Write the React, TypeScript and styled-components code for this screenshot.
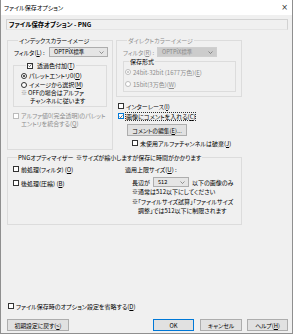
import React from 'react';
import styled, { createGlobalStyle, css } from 'styled-components';

const Global = createGlobalStyle`
  html, body {
    margin: 0;
    padding: 0;
    background: #f0f0f0;
  }
  body {
    font-family: "Noto Sans CJK JP", "Noto Sans", sans-serif;
    font-size: 6px;
    line-height: 7px;
    color: #000;
    font-feature-settings: "palt";
  }
  u { text-decoration-thickness: 0.5px; text-underline-offset: 1px; }
`;

const Window = styled.div`
  width: 293px;
  height: 334px;
  box-sizing: border-box;
  border: 1px solid #8f8f8f;
  border-top: none;
  display: flex;
  flex-direction: column;
  background: #f0f0f0;
`;

const TitleBar = styled.div`
  height: 15px;
  flex: none;
  background: #fff;
  display: flex;
  align-items: center;
  justify-content: space-between;
  padding: 0 4px 0 3px;
`;

const Close = styled.span`
  font-family: "DejaVu Sans", sans-serif;
  font-size: 8px;
  color: #333;
`;

const Body = styled.div`
  flex: 1;
  display: flex;
  flex-direction: column;
  padding: 4px 4px 2px 5px;
`;

const Header = styled.div`
  height: 11px;
  box-sizing: border-box;
  border: 1px solid #d2d2d2;
  border-bottom-color: #e4e4e4;
  display: flex;
  align-items: center;
  padding-left: 2px;
  font-weight: 700;
  font-size: 6.3px;
`;

const MainRow = styled.div`
  display: flex;
  gap: 3px;
  margin-top: 7px;
  padding-left: 1px;
`;

const Column = styled.div`
  display: flex;
  flex-direction: column;
`;

const Group = styled.fieldset<{ $w: number; $pad?: string }>`
  margin: 0;
  min-width: 0;
  width: ${p => p.$w}px;
  box-sizing: border-box;
  border: 1px solid #dcdcdc;
  padding: ${p => p.$pad ?? '0 0 4px 6px'};
  display: flex;
  flex-direction: column;
`;

const Legend = styled.legend<{ $off?: boolean }>`
  margin-left: 4px;
  padding: 0 1px;
  line-height: 7px;
  color: ${p => (p.$off ? '#8d8d8d' : '#000')};
  display: flex;
  align-items: center;
  gap: 2px;
`;

const Row = styled.div<{ $mt?: number; $ml?: number; $h?: number }>`
  display: flex;
  align-items: center;
  height: ${p => p.$h ?? 8}px;
  margin-top: ${p => p.$mt ?? 0}px;
  margin-left: ${p => p.$ml ?? 0}px;
  white-space: nowrap;
`;

const Text = styled.span<{ $off?: boolean; $w?: number }>`
  color: ${p => (p.$off ? '#8d8d8d' : '#000')};
  ${p => p.$w && css`width: ${p.$w}px; flex: none;`}
`;

const SelectBox = styled.div<{ $w: number; $off?: boolean }>`
  width: ${p => p.$w}px;
  height: 10px;
  box-sizing: border-box;
  border: 1px solid ${p => (p.$off ? '#cfcfcf' : '#adadad')};
  background: ${p => (p.$off ? '#cccccc' : '#e5e5e5')};
  color: ${p => (p.$off ? '#8a8a8a' : '#000')};
  display: flex;
  align-items: center;
  justify-content: space-between;
  padding: 0 3px 0 4px;
  font-size: 5.6px;
  flex: none;
`;

const Box = styled.span<{ $focus?: boolean; $off?: boolean; $round?: boolean }>`
  width: 6px;
  height: 6px;
  box-sizing: border-box;
  flex: none;
  border: 1px solid ${p => (p.$off ? '#bcbcbc' : p.$focus ? '#0078d7' : '#333')};
  border-radius: ${p => (p.$round ? '50%' : '0')};
  background: #fff;
  display: inline-flex;
  align-items: center;
  justify-content: center;
  margin-right: 2px;
`;

const Dot = styled.span<{ $off?: boolean }>`
  width: 2px;
  height: 2px;
  border-radius: 50%;
  background: ${p => (p.$off ? '#bcbcbc' : '#222')};
`;

const Focus = styled.span`
  outline: 1px dotted #333;
  outline-offset: 0;
`;

const Note = styled.div<{ $ml?: number; $mt?: number; $lh?: number }>`
  display: flex;
  margin-left: ${p => p.$ml ?? 0}px;
  margin-top: ${p => p.$mt ?? 0}px;
  line-height: ${p => p.$lh ?? 7}px;
  white-space: nowrap;
`;

const NoteBody = styled.div<{ $indent?: number }>`
  display: flex;
  flex-direction: column;
  & > span + span { padding-left: ${p => p.$indent ?? 0}px; }
`;

const Button = styled.div<{ $w: number; $default?: boolean }>`
  width: ${p => p.$w}px;
  height: 12px;
  box-sizing: border-box;
  border: ${p => (p.$default ? '1.5px solid #0078d7' : '1px solid #adadad')};
  background: #e1e1e1;
  display: flex;
  align-items: center;
  justify-content: center;
  font-size: 5.8px;
  flex: none;
`;

const ButtonRow = styled.div`
  display: flex;
  align-items: center;
  margin-top: 9px;
  padding-left: 1px;
`;

const Spacer = styled.div`
  flex: 1;
`;

const Chevron = () => (
  <svg width={5} height={3} viewBox="0 0 10 6" fill="none" stroke="#555" strokeWidth={1.2}>
    <path d="M1 1 L5 5 L9 1" />
  </svg>
);

const Check = ({ checked, focus, off }: { checked?: boolean; focus?: boolean; off?: boolean }) => (
  <Box $focus={focus} $off={off}>
    {checked && (
      <svg width={5} height={5} viewBox="0 0 10 10" fill="none" stroke="#222" strokeWidth={1.6}>
        <path d="M1.5 5.2 L4 7.8 L8.6 2.2" />
      </svg>
    )}
  </Box>
);

const Radio = ({ on, off }: { on?: boolean; off?: boolean }) => (
  <Box $round $off={off}>{on && <Dot $off={off} />}</Box>
);

export default function App() {
  return (
    <>
      <Global />
      <Window>
        <TitleBar>
          <span>ファイル保存オプション</span>
          <Close>×</Close>
        </TitleBar>
        <Body>
          <Header>ファイル保存オプション - PNG</Header>
          <MainRow>
            <Group $w={106} $pad="0 0 21px 6px">
              <Legend>インデックスカラーイメージ</Legend>
              <Row $mt={3} $h={10}>
                <Text $w={35}>フィルタ(<u>L</u>) :</Text>
                <SelectBox $w={59}>
                  <span>OPTPiX標準</span>
                  <Chevron />
                </SelectBox>
              </Row>
              <Group $w={94} $pad="0 0 2px 7px" style={{ marginTop: 5, marginLeft: -1 }}>
                <Legend style={{ marginLeft: 5 }}>
                  <Check checked />
                  <span>透過色付加(<u>T</u>)</span>
                </Legend>
                <Row $mt={2} $h={9}>
                  <Radio on />
                  <span>パレットエントリ0(<u>O</u>)</span>
                </Row>
                <Row $h={9}>
                  <Radio />
                  <span>イメージから選択(<u>M</u>)</span>
                </Row>
                <Note $lh={7.6}>
                  <Text $w={7} $off>※</Text>
                  <NoteBody $indent={2}>
                    <span>OFFの場合はアルファ</span>
                    <span>チャンネルに従います</span>
                  </NoteBody>
                </Note>
              </Group>
              <Note $mt={5} $ml={-1} $lh={8}>
                <span style={{ paddingTop: 1 }}>
                  <Check off />
                </span>
                <NoteBody>
                  <Text $off>アルファ値0(完全透明)のパレット</Text>
                  <Text $off>エントリを統合する(<u>Q</u>)</Text>
                </NoteBody>
              </Note>
            </Group>
            <Column>
              <Group $w={126} $pad="0 0 4px 6px">
                <Legend $off>ダイレクトカラーイメージ</Legend>
                <Row $mt={3} $h={10}>
                  <Text $w={34} $off>フィルタ(<u>R</u>) :</Text>
                  <SelectBox $w={60} $off>
                    <span>OPTPiX標準</span>
                    <Chevron />
                  </SelectBox>
                </Row>
                <Group $w={113} $pad="0 0 2px 1px" style={{ marginTop: 1 }}>
                  <Legend>保存形式</Legend>
                  <Row $mt={2} $h={10}>
                    <Radio on off />
                    <Text $off>24bit-32bit (1677万色)(<u>E</u>)</Text>
                  </Row>
                  <Row $mt={2} $h={10}>
                    <Radio off />
                    <Text $off>15bit(3万色)(<u>W</u>)</Text>
                  </Row>
                </Group>
              </Group>
              <Row $mt={5} $ml={2}>
                <Check />
                <span>インターレース(<u>I</u>)</span>
              </Row>
              <Row $mt={2} $ml={2}>
                <Check checked focus />
                <Focus>画像にコメントを入れる(<u>C</u>)</Focus>
              </Row>
              <Row $mt={4} $ml={11} $h={12}>
                <Button $w={60}>コメントの編集(<u>E</u>)...</Button>
              </Row>
              <Row $mt={3} $ml={16}>
                <Check />
                <span>未使用アルファチャンネルは破棄(<u>J</u>)</span>
              </Row>
            </Column>
          </MainRow>
          <Group $w={235} $pad="0 0 4px 5px" style={{ marginTop: 4, marginLeft: 1 }}>
            <Legend>PNGオプティマイザー&nbsp; ※サイズが縮小しますが保存に時間がかかります</Legend>
            <Row style={{ alignItems: 'flex-start' }} $h={59}>
              <Column style={{ width: 112 }}>
                <Row $mt={4}>
                  <Check />
                  <span>前処理(フィルタ) (<u>O</u>)</span>
                </Row>
                <Row $mt={6}>
                  <Check />
                  <span>後処理(圧縮) (<u>B</u>)</span>
                </Row>
              </Column>
              <Column>
                <Row $mt={4}>
                  <span>適用上限サイズ(<u>U</u>) :</span>
                </Row>
                <Row $mt={4} $ml={7} $h={10}>
                  <Text $w={21}>長辺が</Text>
                  <SelectBox $w={36}>
                    <span>512</span>
                    <Chevron />
                  </SelectBox>
                  <span style={{ marginLeft: 3 }}>以下の画像のみ</span>
                </Row>
                <Note $ml={7} $mt={1}>
                  <span>※通常は512以下にしてください</span>
                </Note>
                <Note $ml={7} $mt={2} $lh={9}>
                  <Text $w={6}>※</Text>
                  <NoteBody $indent={0}>
                    <span>「ファイルサイズ試算」「ファイルサイズ</span>
                    <span>調整」では512以下に制限されます</span>
                  </NoteBody>
                </Note>
              </Column>
            </Row>
          </Group>
          <Spacer />
          <Row $ml={2}>
            <Check />
            <span>ファイル保存時のオプション設定を省略する(<u>D</u>)</span>
          </Row>
          <ButtonRow>
            <Button $w={62}>初期設定に戻す(<u>&lt;</u>)</Button>
            <Spacer />
            <Button $w={41} $default>OK</Button>
            <Button $w={42} style={{ marginLeft: 6 }}>キャンセル</Button>
            <Button $w={41} style={{ marginLeft: 5 }}>ヘルプ(<u>H</u>)</Button>
          </ButtonRow>
        </Body>
      </Window>
    </>
  );
}
